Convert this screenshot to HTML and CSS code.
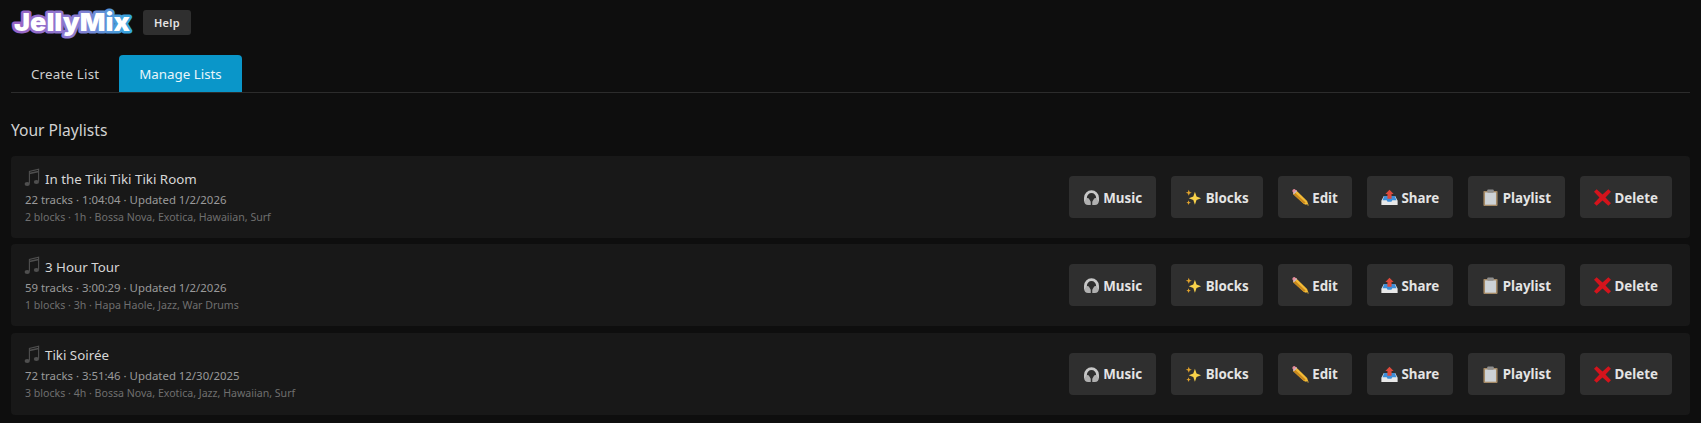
FILE: index.html
```html
<!DOCTYPE html>
<html lang="en">
<head>
  <meta name="viewport" content="width=device-width, initial-scale=1.0">
  <title>JellyMix</title>
  <link rel="stylesheet" href="styles.css">
</head>
<body>
  <svg class="sprite" width="0" height="0">
    <defs>
      <linearGradient id="logoGrad" gradientUnits="userSpaceOnUse" x1="0" y1="0" x2="122" y2="0">
        <stop offset="0" stop-color="#9a62c4"/>
        <stop offset="0.55" stop-color="#8a7ed2"/>
        <stop offset="1" stop-color="#2fa8de"/>
      </linearGradient>
      <symbol id="i-note" viewBox="0 0 16 19">
        <path d="M5.4 15.5V3.4L14.6 1.2V13.4" fill="none" stroke="#4f4f4f" stroke-width="1.1"/>
        <path d="M5.4 5.6L14.6 3.4" fill="none" stroke="#4f4f4f" stroke-width="1.5"/>
        <ellipse cx="3.2" cy="16" rx="2.6" ry="2" fill="#4f4f4f"/>
        <ellipse cx="12.4" cy="14" rx="2.6" ry="2" fill="#4f4f4f"/>
      </symbol>
      <symbol id="i-phones" viewBox="0 0 18 18">
        <path d="M2.6 13V9.2a6.4 6.4 0 0 1 12.8 0V13" fill="none" stroke="#c8c8c8" stroke-width="3"/>
        <path d="M2.8 11a2.6 2.6 0 0 1 3.4-1L8.2 13.4V17H5.4A4.4 4.4 0 0 1 1.2 13Z" fill="#b0b0b0"/>
        <path d="M15.2 11a2.6 2.6 0 0 0-3.4-1L9.8 13.4V17h2.8a4.4 4.4 0 0 0 4.2-4Z" fill="#b0b0b0"/>
      </symbol>
      <symbol id="i-spark" viewBox="0 0 18 18">
        <path d="M10.5 3L12.2 8L17 9.8L12.2 11.6L10.5 16.6L8.8 11.6L4 9.8L8.8 8Z" fill="#f8d24a"/>
        <path d="M4 0.8L4.9 3.2L7.2 4L4.9 4.8L4 7.2L3.1 4.8L0.8 4L3.1 3.2Z" fill="#e5a52c"/>
        <path d="M3.8 12L4.5 13.8L6.2 14.5L4.5 15.2L3.8 17L3.1 15.2L1.4 14.5L3.1 13.8Z" fill="#e5a52c"/>
      </symbol>
      <symbol id="i-pencil" viewBox="0 0 18 18">
        <path d="M4.6 1.6L16 12.6L17.8 17.8L12.6 16L1 5.2Z" fill="#f3bb36"/>
        <path d="M1 5.2L12.6 16L14.4 14.2L2.8 3.4Z" fill="#c8881e"/>
        <path d="M0.4 2.4A2 2 0 0 1 3 0.2L5.4 2.2L2 5.6Z" fill="#e78c9c"/>
        <path d="M2 5.6L5.4 2.2L4.4 1.4L1.2 4.6Z" fill="#c2c2c2"/>
        <path d="M15.8 15.9L17.8 17.8L15 16.8Z" fill="#3c3c3c"/>
      </symbol>
      <symbol id="i-share" viewBox="0 0 18 18">
        <path d="M3 7.5H15L17.6 12.5V17H0.4V12.5Z" fill="#e8e8e8"/>
        <path d="M3.4 7.5H14.6L16.4 12H12L11 13.6H7L6 12H1.6Z" fill="#3d8ed8"/>
        <path d="M9 0.8L13.4 5.4H11.2V10.4H6.8V5.4H4.6Z" fill="#dd4a3c"/>
      </symbol>
      <symbol id="i-clip" viewBox="0 0 18 18">
        <rect x="1.5" y="2" width="15" height="16" rx="1" fill="#a58a66"/>
        <rect x="3.2" y="3.6" width="11.6" height="13" fill="#cdd2d6"/>
        <rect x="5.6" y="0.4" width="6.8" height="3.6" rx="0.8" fill="#8f8f8f"/>
      </symbol>
      <symbol id="i-cross" viewBox="0 0 18 18">
        <path d="M2.8 0.2L9 5.8L15.2 0.2L18 3L12.2 9L18 15L15.2 17.8L9 12.2L2.8 17.8L0 15L5.8 9L0 3Z" fill="#d4141c"/>
      </symbol>
    </defs>
  </svg>

  <header class="topbar">
    <svg class="logo" width="122" height="30" viewBox="0 0 122 30">
      <text x="3" y="24" class="logo-text" textLength="116" lengthAdjust="spacingAndGlyphs">JellyMix</text>
    </svg>
    <button class="btn btn-help">Help</button>
  </header>

  <nav class="tabs">
    <a class="tab">Create List</a>
    <a class="tab active">Manage Lists</a>
  </nav>

  <h2 class="section-title">Your Playlists</h2>

  <div class="playlist">
    <div class="info">
      <div class="name"><svg class="note"><use href="#i-note"/></svg>In the Tiki Tiki Tiki Room</div>
      <div class="meta">22 tracks · 1:04:04 · Updated 1/2/2026</div>
      <div class="sub">2 blocks · 1h · Bossa Nova, Exotica, Hawaiian, Surf</div>
    </div>
    <div class="actions">
      <button class="btn"><svg class="ico"><use href="#i-phones"/></svg>Music</button>
      <button class="btn"><svg class="ico"><use href="#i-spark"/></svg>Blocks</button>
      <button class="btn"><svg class="ico"><use href="#i-pencil"/></svg>Edit</button>
      <button class="btn"><svg class="ico"><use href="#i-share"/></svg>Share</button>
      <button class="btn"><svg class="ico"><use href="#i-clip"/></svg>Playlist</button>
      <button class="btn"><svg class="ico"><use href="#i-cross"/></svg>Delete</button>
    </div>
  </div>

  <div class="playlist">
    <div class="info">
      <div class="name"><svg class="note"><use href="#i-note"/></svg>3 Hour Tour</div>
      <div class="meta">59 tracks · 3:00:29 · Updated 1/2/2026</div>
      <div class="sub">1 blocks · 3h · Hapa Haole, Jazz, War Drums</div>
    </div>
    <div class="actions">
      <button class="btn"><svg class="ico"><use href="#i-phones"/></svg>Music</button>
      <button class="btn"><svg class="ico"><use href="#i-spark"/></svg>Blocks</button>
      <button class="btn"><svg class="ico"><use href="#i-pencil"/></svg>Edit</button>
      <button class="btn"><svg class="ico"><use href="#i-share"/></svg>Share</button>
      <button class="btn"><svg class="ico"><use href="#i-clip"/></svg>Playlist</button>
      <button class="btn"><svg class="ico"><use href="#i-cross"/></svg>Delete</button>
    </div>
  </div>

  <div class="playlist">
    <div class="info">
      <div class="name"><svg class="note"><use href="#i-note"/></svg>Tiki Soirée</div>
      <div class="meta">72 tracks · 3:51:46 · Updated 12/30/2025</div>
      <div class="sub">3 blocks · 4h · Bossa Nova, Exotica, Jazz, Hawaiian, Surf</div>
    </div>
    <div class="actions">
      <button class="btn"><svg class="ico"><use href="#i-phones"/></svg>Music</button>
      <button class="btn"><svg class="ico"><use href="#i-spark"/></svg>Blocks</button>
      <button class="btn"><svg class="ico"><use href="#i-pencil"/></svg>Edit</button>
      <button class="btn"><svg class="ico"><use href="#i-share"/></svg>Share</button>
      <button class="btn"><svg class="ico"><use href="#i-clip"/></svg>Playlist</button>
      <button class="btn"><svg class="ico"><use href="#i-cross"/></svg>Delete</button>
    </div>
  </div>
</body>
</html>
```

FILE: styles.css
```css
html, body {
  height: 100%;
}

body {
  margin: 0;
  padding: 0 11px;
  background: #0e0e0e;
  color: #e0e0e0;
  font-family: "Noto Sans", sans-serif;
  overflow: hidden;
}

.sprite {
  display: block;
  height: 0;
}

.topbar {
  display: flex;
  align-items: center;
  gap: 10px;
  height: 44px;
}

.logo {
  display: block;
  overflow: visible;
}

.logo-text {
  font-family: Inter, "DejaVu Sans", sans-serif;
  font-weight: 900;
  font-size: 25px;
  fill: #fff;
  stroke: url(#logoGrad);
  stroke-width: 5px;
  stroke-linejoin: round;
  paint-order: stroke;
}

.btn {
  display: flex;
  align-items: center;
  gap: 3.6px;
  height: 42px;
  padding: 1px 14px 0;
  border: none;
  border-radius: 4px;
  background: #2f2f2f;
  color: #e4e4e4;
  font-family: "Noto Sans", sans-serif;
  font-weight: 700;
  font-size: 13.33px;
}

.btn-help {
  height: 25px;
  padding: 0 11px;
  font-size: 11px;
  font-weight: 600;
  letter-spacing: 0.3px;
  border-radius: 3px;
}

.tabs {
  display: flex;
  height: 37px;
  margin-top: 11px;
  border-bottom: 1px solid #2c2c2c;
}

.tab {
  display: flex;
  align-items: center;
  padding: 0 20px;
  font-size: 13.33px;
  letter-spacing: 0.2px;
  color: #cfcfcf;
  border-radius: 4px 4px 0 0;
}

.tab.active {
  background: #0a96c9;
  color: #e8f6fb;
  letter-spacing: 0;
}

.section-title {
  margin: 26px 0 15px;
  font-size: 15.6px;
  line-height: 22px;
  font-weight: 400;
  color: #d2d2d2;
}

.playlist {
  display: flex;
  justify-content: space-between;
  align-items: center;
  height: 82px;
  margin-bottom: 6.4px;
  padding: 0 18px 0 14px;
  background: #181818;
  border-radius: 4px;
}

.info {
  margin-top: -2px;
}

.name {
  display: flex;
  align-items: center;
  gap: 5px;
  height: 20px;
  margin-top: 1px;
  font-size: 13.33px;
  line-height: 20px;
  color: #d6d6d6;
}

.note {
  width: 16px;
  height: 19px;
  margin: 0 0 2px -1px;
}

.meta {
  margin-top: 3px;
  font-size: 11.4px;
  line-height: 16px;
  color: #9a9a9a;
}

.sub {
  margin-top: 1px;
  font-size: 10.6px;
  line-height: 16px;
  color: #6f6f6f;
}

.actions {
  display: flex;
  gap: 15px;
}

.ico {
  width: 17px;
  height: 17px;
}
```
